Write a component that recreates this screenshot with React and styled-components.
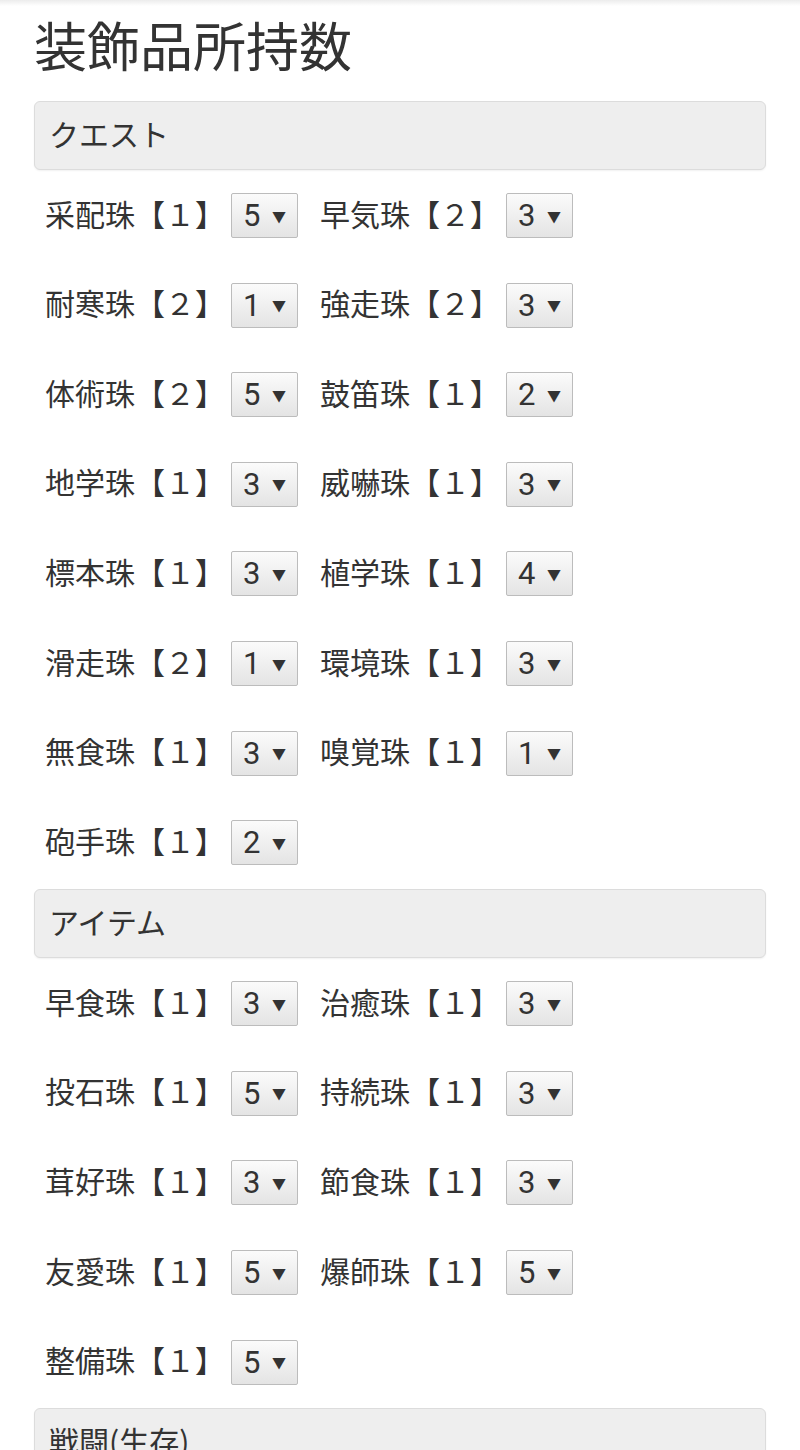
import React from 'react';
import styled, { createGlobalStyle } from 'styled-components';

const GlobalStyle = createGlobalStyle`
  html, body {
    margin: 0;
    padding: 0;
    background: #fff;
  }
  body {
    font-family: "Noto Sans CJK JP", "Noto Sans", sans-serif;
    color: #333;
  }
`;

const sections = [
  {
    title: 'クエスト',
    items: [
      ['采配珠', '１', 5], ['早気珠', '２', 3],
      ['耐寒珠', '２', 1], ['強走珠', '２', 3],
      ['体術珠', '２', 5], ['鼓笛珠', '１', 2],
      ['地学珠', '１', 3], ['威嚇珠', '１', 3],
      ['標本珠', '１', 3], ['植学珠', '１', 4],
      ['滑走珠', '２', 1], ['環境珠', '１', 3],
      ['無食珠', '１', 3], ['嗅覚珠', '１', 1],
      ['砲手珠', '１', 2],
    ],
  },
  {
    title: 'アイテム',
    items: [
      ['早食珠', '１', 3], ['治癒珠', '１', 3],
      ['投石珠', '１', 5], ['持続珠', '１', 3],
      ['茸好珠', '１', 3], ['節食珠', '１', 3],
      ['友愛珠', '１', 5], ['爆師珠', '１', 5],
      ['整備珠', '１', 5],
    ],
  },
  {
    title: '戦闘(生存)',
    items: [],
  },
];

const TopShade = styled.div`
  height: 6px;
  background: linear-gradient(#ececec, #fff);
`;

const Page = styled.main`
  padding: 0 34px 40px;
`;

const Title = styled.h1`
  margin: 7px 0 24px;
  font-size: 53px;
  line-height: 1.2;
  font-weight: 400;
  letter-spacing: 0;
`;

const SectionHead = styled.div`
  display: flex;
  align-items: center;
  height: 69px;
  box-sizing: border-box;
  padding: 0 14px 5px;
  background: #eeeeee;
  border: 1px solid #dcdcdc;
  border-radius: 6px;
  box-shadow: 0 1px 2px rgba(0, 0, 0, 0.06);
  font-size: 30px;
`;

const ItemGrid = styled.div`
  display: grid;
  grid-template-columns: 275px 275px;
  row-gap: 44.6px;
  padding: 23.5px 0 23.5px 11px;
`;

const Item = styled.label`
  display: flex;
  align-items: center;
  gap: 6px;
  height: 45px;
`;

const Name = styled.span`
  padding-bottom: 6px;
  font-size: 30px;
  line-height: 1;
  white-space: nowrap;
`;

const SelectWrap = styled.span`
  position: relative;
  display: inline-block;
  flex: none;
  width: 67px;
  height: 45px;
`;

const Select = styled.select`
  appearance: none;
  -webkit-appearance: none;
  width: 100%;
  height: 100%;
  box-sizing: border-box;
  margin: 0;
  padding: 0 0 0 11px;
  border: 1px solid #bcbcbc;
  border-radius: 2px;
  background: linear-gradient(#fbfbfb, #e4e4e4);
  color: #333;
  font-family: Roboto, "Noto Sans", sans-serif;
  font-size: 31px;
  line-height: 43px;
  outline: none;
`;

const Arrow = styled.span`
  position: absolute;
  right: 12px;
  top: 50%;
  transform: translateY(-50%);
  font-size: 14px;
  line-height: 1;
  color: #333;
  pointer-events: none;
`;

const CountSelect = ({ value }) => (
  <SelectWrap>
    <Select defaultValue={value}>
      {[0, 1, 2, 3, 4, 5, 6, 7].map((n) => (
        <option key={n} value={n}>{n}</option>
      ))}
    </Select>
    <Arrow>▼</Arrow>
  </SelectWrap>
);

export default function App() {
  return (
    <>
      <GlobalStyle />
      <TopShade />
      <Page>
        <Title>装飾品所持数</Title>
        {sections.map((sec) => (
          <section key={sec.title}>
            <SectionHead>{sec.title}</SectionHead>
            {sec.items.length > 0 && (
              <ItemGrid>
                {sec.items.map(([name, slot, count]) => (
                  <Item key={name}>
                    <Name>{name}【{slot}】</Name>
                    <CountSelect value={count} />
                  </Item>
                ))}
              </ItemGrid>
            )}
          </section>
        ))}
      </Page>
    </>
  );
}
